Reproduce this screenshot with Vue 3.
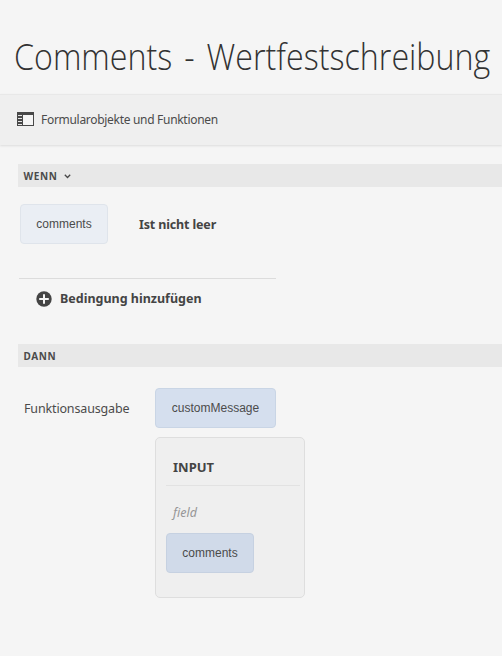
<script setup>
const trigger = 'comments'
const output = 'customMessage'
const input = { title: 'INPUT', label: 'field', value: 'comments' }
</script>

<template>
  <div class="editor">
    <header class="header">
      <h1 class="title">Comments - Wertfestschreibung</h1>
    </header>

    <div class="toolbar">
      <svg class="rail-icon" width="17" height="14" viewBox="0 0 17 14">
        <path fill="#484848" d="M0 0H17V14H0Z" />
        <path fill="#f5f5f5" d="M6 3H16V13H6Z" />
        <path fill="#e4e4e4" d="M1 3H5V4H1ZM1 6H5V7H1ZM1 9H5V10H1ZM1 12H5V13H1Z" />
      </svg>
      <span class="toolbar-label">Formularobjekte und Funktionen</span>
    </div>

    <main class="rules">
      <section class="when">
        <div class="bar">
          <span class="bar-label">WENN</span>
          <svg class="chevron" width="7" height="5" viewBox="0 0 7 5">
            <path d="M.8.8 3.5 3.5 6.2.8" fill="none" stroke="#484848" stroke-width="1.3" />
          </svg>
        </div>
        <div class="condition">
          <button class="chip chip-light">{{ trigger }}</button>
          <span class="operator">Ist nicht leer</span>
        </div>
        <div class="add">
          <svg width="16" height="16" viewBox="0 0 16 16">
            <circle cx="8" cy="8" r="7.7" fill="#444" />
            <path d="M8 3.2V12.8M3.2 8H12.8" stroke="#f5f5f5" stroke-width="2" />
          </svg>
          <span class="add-label">Bedingung hinzufügen</span>
        </div>
      </section>

      <section class="then">
        <div class="bar"><span class="bar-label">DANN</span></div>
        <div class="action">
          <span class="action-label">Funktionsausgabe</span>
          <div class="action-body">
            <button class="chip chip-wide">{{ output }}</button>
            <div class="panel">
              <div class="panel-title"><span>{{ input.title }}</span></div>
              <div class="panel-field"><span>{{ input.label }}</span></div>
              <button class="chip chip-deep">{{ input.value }}</button>
            </div>
          </div>
        </div>
      </section>
    </main>
  </div>
</template>

<style>
body {
  background: #f5f5f5;
}
</style>

<style scoped>
.editor {
  height: 656px;
  overflow: hidden;
  background: #f5f5f5;
  color: #4b4b4b;
  font-family: "Noto Sans", "Open Sans", sans-serif;
  font-size: 13px;
  white-space: nowrap;
}
.header {
  box-sizing: border-box;
  height: 94px;
  padding: 32px 0 0 14px;
}
.title {
  width: max-content;
  margin: 0;
  font-family: "Open Sans", sans-serif;
  font-weight: 300;
  font-size: 36px;
  line-height: 50px;
  word-spacing: 4px;
  color: #323232;
  transform: scaleX(0.895);
  transform-origin: left;
}
.toolbar {
  box-sizing: border-box;
  height: 51px;
  display: flex;
  align-items: center;
  gap: 7px;
  padding: 0 0 2px 17px;
  background: #efefef;
  border-top: 1px solid #e8e8e8;
  box-shadow: 0 1px 2px #dcdcdc;
}
.toolbar-label {
  font-size: 12px;
  letter-spacing: -0.3px;
}
.rules {
  padding: 19px 0 0 18px;
}
.bar {
  display: flex;
  align-items: center;
  gap: 7px;
  height: 23px;
  padding-left: 5.5px;
  background: #e8e8e8;
}
.bar-label {
  font-size: 10px;
  font-weight: 700;
  letter-spacing: 0.6px;
}
.chevron {
  margin-top: 1px;
}
.condition {
  display: flex;
  align-items: center;
  gap: 31px;
  padding: 17px 0 0 2px;
}
.chip {
  box-sizing: border-box;
  display: block;
  width: 88px;
  height: 40px;
  padding: 0;
  border: 1px solid #c9d5e5;
  border-radius: 4px;
  background: #d5dfee;
  color: #4b4b4b;
  font-family: "Liberation Sans", Arial, sans-serif;
  font-size: 12px;
}
.chip-light {
  background: #eaeef4;
  border-color: #dfe4eb;
}
.chip-wide {
  width: 121px;
}
.chip-deep {
  background: #d0dae9;
  border-color: #c6d1e1;
}
.operator,
.add-label {
  font-weight: 700;
  font-size: 12.5px;
  color: #444;
}
.operator {
  letter-spacing: -0.15px;
}
.add {
  box-sizing: border-box;
  width: 257px;
  height: 42px;
  display: flex;
  align-items: center;
  gap: 8px;
  margin: 34px 0 0 1px;
  padding: 0 0 2px 17px;
  border-top: 1px solid #dcdcdc;
}
.then {
  margin-top: 24px;
}
.action {
  display: flex;
  padding: 21px 0 0 6px;
}
.action-label {
  width: 131px;
  line-height: 42px;
  font-size: 12.5px;
  letter-spacing: -0.15px;
}
.panel {
  box-sizing: border-box;
  width: 150px;
  height: 161px;
  margin-top: 9px;
  padding: 10px 4px 0 10px;
  background: #efefef;
  border: 1px solid #dedede;
  border-radius: 5px;
}
.panel-title {
  box-sizing: border-box;
  height: 38px;
  padding-left: 7px;
  border-bottom: 1px solid #e2e2e2;
  font-size: 13px;
  line-height: 39px;
  font-weight: 700;
  color: #444;
}
.panel-field {
  height: 47px;
  padding-left: 7px;
  line-height: 54px;
  font-size: 12.5px;
  font-style: italic;
  color: #969696;
}
</style>
